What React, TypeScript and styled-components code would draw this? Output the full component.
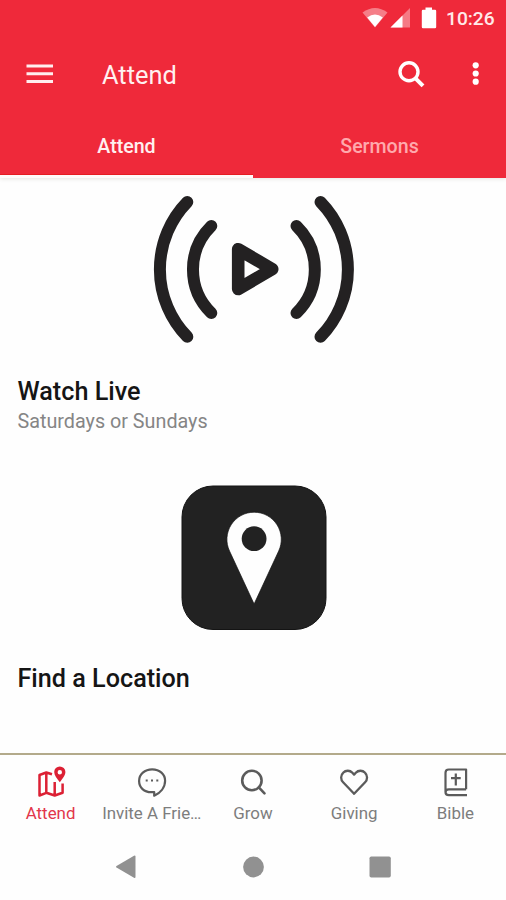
import React from "react";
import styled, { createGlobalStyle } from "styled-components";

const GlobalStyle = createGlobalStyle`
  * { box-sizing: border-box; }
  body { margin: 0; background: #fefefe; font-family: Roboto, "Liberation Sans", sans-serif; }
  button { border: 0; margin: 0; padding: 0; background: none; font: inherit; }
`;

const Screen = styled.div`
  width: 506px;
  height: 900px;
  display: flex;
  flex-direction: column;
  overflow: hidden;
  background: #fefefe;
`;

const Header = styled.header`
  height: 178px;
  flex: none;
  display: flex;
  flex-direction: column;
  background: #ef293a;
  color: #fff;
  box-shadow: 0 1px 4px rgba(60, 50, 20, 0.12);
`;

const StatusBar = styled.div`
  height: 37px;
  display: flex;
  justify-content: flex-end;
  padding-right: 11px;
`;

const Clock = styled.span`
  width: 49px;
  margin-left: 9px;
  font-size: 19.2px;
  line-height: 37px;
  font-weight: 500;
  color: #ffe9e9;
  white-space: nowrap;
`;

const Toolbar = styled.div`
  height: 74px;
  display: flex;
  align-items: center;
  padding: 0 25px 0 26px;
`;

const IconButton = styled.button<{ $gap?: number }>`
  display: flex;
  color: inherit;
  margin-left: ${(p) => p.$gap ?? 0}px;
`;

const Title = styled.h1`
  flex: 1;
  margin: 1px 0 0 48px;
  font-size: 25.4px;
  line-height: 30px;
  font-weight: 400;
  color: #fff0f0;
`;

const Tabs = styled.nav`
  flex: 1;
  display: grid;
  grid-template-columns: 1fr 1fr;
`;

const Tab = styled.button<{ $active?: boolean }>`
  display: flex;
  justify-content: center;
  padding-top: 24px;
  font-size: 19.6px;
  line-height: 24px;
  font-weight: 500;
  color: ${(p) => (p.$active ? "#fff0f0" : "#ffa9ad")};
  border-bottom: 3px solid ${(p) => (p.$active ? "#fffafa" : "transparent")};
  box-shadow: ${(p) => (p.$active ? "inset 0 -1px 0 #e51c22" : "none")};
`;

const Content = styled.main`
  flex: 1;
  display: flex;
  flex-direction: column;
  padding-top: 12px;
`;

const Card = styled.section<{ $height: number }>`
  height: ${(p) => p.$height}px;
  display: flex;
  flex-direction: column;
`;

const Art = styled.div<{ $height: number }>`
  height: ${(p) => p.$height}px;
  display: flex;
  justify-content: center;
  padding-left: 2px;
`;

const CardTitle = styled.h2`
  margin: 0 0 0 17.5px;
  font-size: 25.2px;
  line-height: 30px;
  font-weight: 500;
  color: #151515;
  white-space: nowrap;
`;

const CardText = styled.p`
  margin: 2px 0 0 17.5px;
  font-size: 19.75px;
  line-height: 26px;
  color: #858585;
`;

const BottomBar = styled.nav`
  height: 82px;
  flex: none;
  display: grid;
  grid-template-columns: repeat(5, 1fr);
  border-top: 2px solid #b3aa8b;
`;

const BottomItem = styled.button<{ $active?: boolean }>`
  min-width: 0;
  display: flex;
  flex-direction: column;
  align-items: center;
  padding-top: 10px;
  color: ${(p) => (p.$active ? "#dc2034" : "#5b5b5b")};
`;

const BottomLabel = styled.span<{ $active?: boolean }>`
  max-width: 100%;
  margin-top: 5px;
  font-size: 16.9px;
  line-height: 22px;
  color: ${(p) => (p.$active ? "#e2364a" : "#7d7d7d")};
  white-space: nowrap;
`;

const SystemBar = styled.footer`
  height: 65px;
  flex: none;
  display: grid;
  grid-template-columns: repeat(3, 127px);
  justify-content: center;
  justify-items: center;
  padding-top: 19px;
  color: #919191;
`;

const StatusIcons = () => (
  <svg width="77" height="37" viewBox="360 0 77 37" fill="#fff">
    <path d="M362.5 12.5Q375 3.5 387.5 12.5L375 27.5Z" opacity=".4" />
    <path d="M367.2 17.4Q375 11.5 382.8 17.4L375 27Z" />
    <path d="M410 8V27.5H390.5Z" opacity=".38" />
    <path d="M402.5 15.5V27.5H390.5Z" />
    <path d="M425.5 7.5h6.5v2.3h3a1.2 1.2 0 0 1 1.2 1.2v16a1.2 1.2 0 0 1-1.2 1.2h-12a1.2 1.2 0 0 1-1.2-1.2v-16a1.2 1.2 0 0 1 1.2-1.2h2.5Z" />
  </svg>
);

const MenuIcon = () => (
  <svg width="28" height="24" viewBox="26 61.5 28 24" fill="#ffeeee">
    <path d="M26.5 64h26.5v3h-26.5zM26.5 71.7h26.5v3h-26.5zM26.5 79.4h26.5v3h-26.5z" />
  </svg>
);

const SearchIcon = () => (
  <svg width="30" height="30" viewBox="396 59 30 30" fill="none" stroke="#fff" strokeWidth="3.4">
    <circle cx="409" cy="71.8" r="9" />
    <path d="M415.5 78.3 423 85.8" strokeWidth="4" />
  </svg>
);

const MoreIcon = () => (
  <svg width="10" height="30" viewBox="471 59 10 30" fill="#fff">
    <circle cx="475.7" cy="65.3" r="3.1" />
    <circle cx="475.7" cy="73.5" r="3.1" />
    <circle cx="475.7" cy="81.7" r="3.1" />
  </svg>
);

const BroadcastIcon = () => (
  <svg width="204" height="160" viewBox="152.5 190 204 160" fill="none" stroke="#232122" strokeWidth="12" strokeLinecap="round" strokeLinejoin="round">
    <path d="M187.8 202A96.6 96.6 0 0 0 187.8 336.8M211.8 226A60.8 60.8 0 0 0 211.8 313M297 226A60.8 60.8 0 0 1 297 313M321 202A96.6 96.6 0 0 1 321 336.8" />
    <path d="M238.7 249.2V289L272.7 269.1Z" strokeWidth="12.6" />
  </svg>
);

const LocationIcon = () => (
  <svg width="146" height="146" viewBox="181.5 485 146 146">
    <rect x="182.5" y="486" width="144" height="143.5" rx="31" fill="#222" stroke="#141414" />
    <path d="M254.6 604 230 551A27.2 27.2 0 1 1 279.2 551Z" fill="#fefefe" stroke="#111" strokeWidth=".7" />
    <circle cx="254.6" cy="538.7" r="12.4" fill="#222" />
  </svg>
);

const MapIcon = () => (
  <svg width="30" height="32" viewBox="36 765 30 32" fill="none" stroke="currentColor" strokeWidth="2.5" strokeLinejoin="round">
    <path d="M52 774.3 46.3 772.5 39.5 775V795.5L46.3 792.8 54.7 795.5 62.6 792.8V783.5M46.3 772.5V792.8M54.7 782V795.5" />
    <path d="M59.8 782.3C57 778.5 54.2 775.5 54.2 772a5.6 5.6 0 0 1 11.2 0C65.4 775.5 62.6 778.5 59.8 782.3ZM59.8 770.1a2.2 2.2 0 1 0 0 4.4a2.2 2.2 0 1 0 0-4.4Z" fill="currentColor" fillRule="evenodd" stroke="none" />
  </svg>
);

const ChatIcon = () => (
  <svg width="30" height="32" viewBox="137.3 765 30 32" fill="none" stroke="currentColor" strokeWidth="2.2" strokeLinejoin="round">
    <path d="M154.5 792C143.5 793.4 139.4 786.5 139.4 781C139.4 774.3 145 769.4 152.5 769.4S165.4 774.3 165.4 780.7C165.4 787.5 160.5 793 154.5 795.7Z" />
    <path d="M146 780.5h2M151.3 780.5h2M156.6 780.5h2" />
  </svg>
);

const GrowIcon = () => (
  <svg width="30" height="32" viewBox="238.5 765 30 32" fill="none" stroke="currentColor" strokeWidth="2.6" strokeLinecap="round">
    <circle cx="252.4" cy="780.5" r="9.7" />
    <path d="M259.3 787.4 265 793.3" />
  </svg>
);

const HeartIcon = () => (
  <svg width="30" height="32" viewBox="339.7 765 30 32" fill="none" stroke="currentColor" strokeWidth="2.3" strokeLinejoin="round">
    <path d="M354.8 793.8 343.8 782.3C341.2 779.5 341.2 775.3 343.8 772.8C346.4 770.1 350.6 770.1 353.1 772.8L354.8 774.6 356.5 772.8C359 770.1 363.2 770.1 365.8 772.8C368.4 775.3 368.4 779.5 365.8 782.3Z" />
  </svg>
);

const BibleIcon = () => (
  <svg width="30" height="32" viewBox="440.5 765 30 32" fill="none" stroke="currentColor" strokeWidth="2.2" strokeLinejoin="round">
    <path d="M466.6 789.3V769.5H449.3Q446 769.5 446 772.8V792Q446 795.2 449.3 795.2H467.5M466.6 789.3H449.3Q446 789.3 446 792.2M456.3 773.5V785.5M451.5 778.2H461.2" />
  </svg>
);

const sections = [
  { label: "Attend", Icon: MapIcon },
  { label: "Invite A Frie…", Icon: ChatIcon },
  { label: "Grow", Icon: GrowIcon },
  { label: "Giving", Icon: HeartIcon },
  { label: "Bible", Icon: BibleIcon },
];

export default function App() {
  return (
    <>
      <GlobalStyle />
      <Screen>
        <Header>
          <StatusBar>
            <StatusIcons />
            <Clock>10:26</Clock>
          </StatusBar>
          <Toolbar>
            <IconButton aria-label="Menu"><MenuIcon /></IconButton>
            <Title>Attend</Title>
            <IconButton aria-label="Search"><SearchIcon /></IconButton>
            <IconButton aria-label="More options" $gap={45}><MoreIcon /></IconButton>
          </Toolbar>
          <Tabs>
            <Tab $active>Attend</Tab>
            <Tab>Sermons</Tab>
          </Tabs>
        </Header>
        <Content>
          <Card $height={295}>
            <Art $height={187}><BroadcastIcon /></Art>
            <CardTitle>Watch Live</CardTitle>
            <CardText>Saturdays or Sundays</CardText>
          </Card>
          <Card $height={230}>
            <Art $height={179}><LocationIcon /></Art>
            <CardTitle>Find a Location</CardTitle>
          </Card>
        </Content>
        <BottomBar>
          {sections.map(({ label, Icon }, i) => (
            <BottomItem key={label} $active={i === 0}>
              <Icon />
              <BottomLabel $active={i === 0}>{label}</BottomLabel>
            </BottomItem>
          ))}
        </BottomBar>
        <SystemBar>
          <svg width="24" height="26" viewBox="0 0 24 26" fill="currentColor"><path d="M21.5 2.5V23a1 1 0 0 1-1.5.8L2.5 13.5a1 1 0 0 1 0-1.6L20 1.7a1 1 0 0 1 1.5.8Z" /></svg>
          <svg width="24" height="26" viewBox="0 0 24 26" fill="currentColor"><circle cx="12.5" cy="13" r="10.4" /></svg>
          <svg width="24" height="26" viewBox="0 0 24 26" fill="currentColor"><rect x="1.5" y="2.5" width="21.3" height="21" rx="1.8" /></svg>
        </SystemBar>
      </Screen>
    </>
  );
}
